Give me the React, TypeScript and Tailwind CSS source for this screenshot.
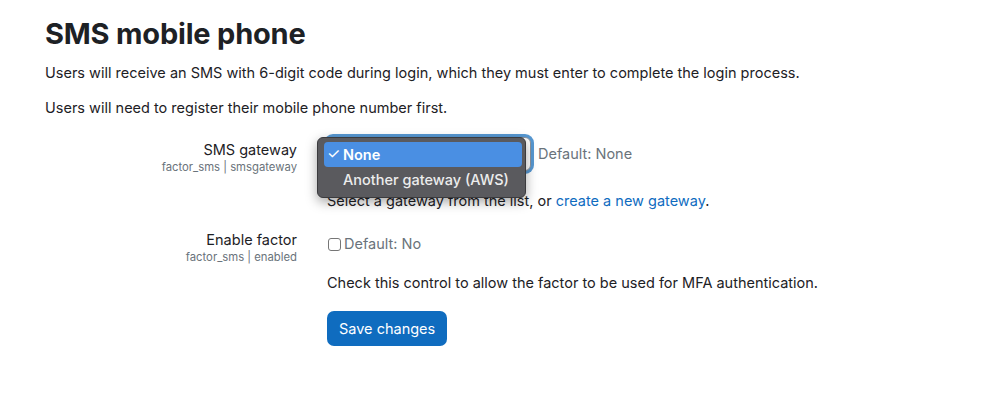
import React from 'react';

const font = "font-['Inter','Noto_Sans',sans-serif]";

const FieldLabel: React.FC<{ title: string; name: string; className?: string }> = ({ title, name, className }) => (
  <div className={`w-[252px] shrink-0 text-right ${className ?? ''}`}>
    <div className="text-[14.5px] leading-[20px] text-[#1d2125]">{title}</div>
    <div className="text-[11.3px] leading-[14px] text-[#6a737b]">{name}</div>
  </div>
);

const GatewayMenu: React.FC = () => (
  <div className="absolute left-[-10px] top-0 z-10 w-[209px] rounded-[6px] border border-[#3b3b3e] bg-[#5a5a5e] pt-[4px] pb-[5px] shadow-[0_4px_12px_rgba(0,0,0,0.35)]">
    <div className="ml-[6px] mr-[3px] flex h-[25px] items-center rounded-[4px] bg-[#4a8fe3] text-[14.5px] font-semibold text-white">
      <span className="w-[19px] pl-[3px] text-[15px] font-normal">✓</span>
      <span>None</span>
    </div>
    <div className="ml-[6px] mr-[3px] flex h-[25px] items-center text-[14.5px] font-medium text-[#ececec]">
      <span className="w-[19px]" />
      <span>Another gateway (AWS)</span>
    </div>
  </div>
);

const App: React.FC = () => {
  return (
    <div className={`min-h-[410px] bg-white px-[45px] pt-[16px] text-[14.5px] text-[#1d2125] ${font}`}>
      <h2 className="text-[29px] font-bold leading-[36px] tracking-[-0.2px]">SMS mobile phone</h2>
      <p className="mt-[10px] leading-[22px]">
        Users will receive an SMS with 6-digit code during login, which they must enter to complete the login process.
      </p>
      <p className="mt-[13px] leading-[22px]">Users will need to register their mobile phone number first.</p>

      <div className="mt-[18px] flex gap-[30px]">
        <FieldLabel title="SMS gateway" name="factor_sms | smsgateway" className="pt-[3px]" />
        <div>
          <div className="flex items-center gap-[7px]">
            <div className="relative">
              <div className="h-[34px] w-[204px] rounded-[6px] border border-[#8f959e] bg-white shadow-[0_0_0_3px_rgba(15,108,191,0.7)]" />
              <GatewayMenu />
            </div>
            <span className="leading-[22px] text-[#6a737b]">Default: None</span>
          </div>
          <p className="mt-[19px] leading-[22px]">
            Select a gateway from the list, or <a className="text-[#0f6cbf]">create a new gateway</a>.
          </p>
        </div>
      </div>

      <div className="mt-[18px] flex gap-[30px]">
        <FieldLabel title="Enable factor" name="factor_sms | enabled" />
        <div className="pt-[3px]">
          <label className="flex items-center gap-[3px] leading-[22px] text-[#6a737b]">
            <span className="ml-[1px] inline-block h-[13px] w-[13px] rounded-[3px] border border-[#767676] bg-white" />
            Default: No
          </label>
          <p className="mt-[17px] leading-[22px]">Check this control to allow the factor to be used for MFA authentication.</p>
          <button className="mt-[17px] h-[35px] rounded-[7px] bg-[#0f6cbf] px-[12px] text-[14.5px] text-white">
            Save changes
          </button>
        </div>
      </div>
    </div>
  );
};

export default App;
